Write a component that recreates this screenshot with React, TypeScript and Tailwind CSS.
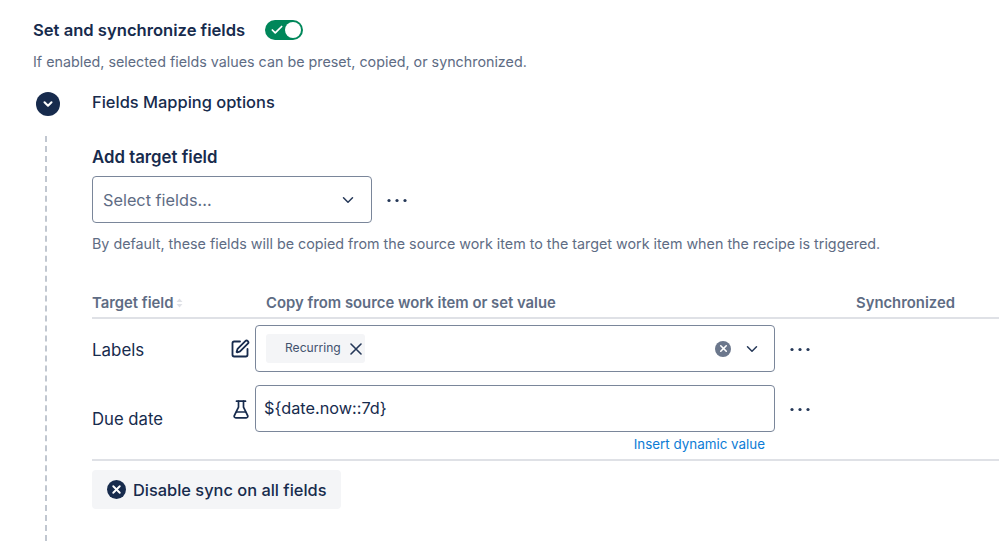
import { Check, ChevronDown, SquarePen, X } from 'lucide-react';

const Dots = () => (
  <svg width="20" height="5" viewBox="0 0 20 5" className="text-[#253858] mt-px" fill="currentColor">
    <circle cx="2" cy="2.5" r="1.6" />
    <circle cx="10" cy="2.5" r="1.6" />
    <circle cx="18" cy="2.5" r="1.6" />
  </svg>
);

const Flask = () => (
  <svg width="16" height="19" viewBox="0 0 16 19" fill="none" stroke="#172b4d" strokeWidth="1.7" strokeLinejoin="round" strokeLinecap="round">
    <path d="M3.5 1.200h9" />
    <path d="M5.500 1.200v6L1.400 15.500c-.6 1.200.2 2.300 1.400 2.300h10.400c1.200 0 2-1.100 1.400-2.300L10.500 7.200v-6" />
    <path d="M3.500 12h9" />
  </svg>
);

const App = () => {
  return (
    <div className="w-[999px] h-[541px] overflow-hidden bg-white text-[#172b4d] font-['Inter',sans-serif] pt-5">
      {/* Header */}
      <div className="pl-[33px] flex items-center h-5">
        <span className="text-[16.6px] font-semibold w-[232px]">Set and synchronize fields</span>
        <div className="w-[38px] h-5 rounded-full bg-[#00875a] flex items-center justify-between pl-[5px] pr-[2px]">
          <Check size={14} strokeWidth={3} className="text-white" />
          <div className="w-4 h-4 rounded-full bg-white" />
        </div>
      </div>
      <p className="pl-[33px] mt-[13px] text-[14.3px] leading-[18px] text-[#5e6c84]">
        If enabled, selected fields values can be preset, copied, or synchronized.
      </p>

      {/* Mapping section */}
      <div className="mt-[21px] pl-[36px] flex h-6 items-center">
        <div className="w-6 h-6 rounded-full bg-[#172b4d] flex items-center justify-center">
          <ChevronDown size={14} strokeWidth={3.5} className="text-white" />
        </div>
        <span className="ml-8 -mt-[4px] text-[16.45px] font-medium">Fields Mapping options</span>
      </div>

      <div className="mt-5 ml-[45px] pl-[45px] h-[405px] border-l-2 border-dashed border-[#c1c7d0] pt-[11px]">
        <div className="text-[16.8px] font-semibold leading-5">Add target field</div>
        <div className="mt-[9px] flex items-center">
          <div className="w-[280px] h-[47px] border border-[#7a869a] rounded-[4px] flex items-center justify-between pl-[10px] pr-[14px]">
            <span className="text-[16.3px] text-[#5e6c84] mt-px">Select fields...</span>
            <ChevronDown size={18} strokeWidth={2} className="text-[#253858]" />
          </div>
          <div className="ml-[15px]"><Dots /></div>
        </div>
        <p className="mt-[12px] text-[14.3px] leading-[18px] text-[#5e6c84]">
          By default, these fields will be copied from the source work item to the target work item when the recipe is triggered.
        </p>

        {/* Table head */}
        <div className="mt-[39px] h-[22px] flex items-center text-[14.85px] font-semibold text-[#5e6c84] border-b-2 border-[#dfe1e6] pb-[3px] box-content">
          <div className="w-[174px] flex items-center gap-[2px]">
            Target field
            <svg width="7" height="10" viewBox="0 0 7 10" fill="#dfe1e6">
              <path d="M3.500 0.500 6.500 4H.5z" />
              <path d="M3.500 9.500 6.500 6H.5z" />
            </svg>
          </div>
          <div className="w-[590px]">Copy from source work item or set value</div>
          <div>Synchronized</div>
        </div>

        {/* Labels row */}
        <div className="mt-[6px] flex items-center h-[47px]">
          <div className="w-[138px] text-[16.9px] mt-[5px]">Labels</div>
          <SquarePen size={20} strokeWidth={2.2} className="text-[#172b4d] shrink-0" />
          <div className="ml-[5px] w-[520px] h-[47px] border border-[#7a869a] rounded-[4px] flex items-center pl-[10px] pr-[13px]">
            <div className="h-[29px] w-[99px] rounded-[3px] bg-[#f4f5f7] flex items-center pl-[19px]">
              <span className="text-[12.1px] text-[#42526e] mr-[9px]">Recurring</span>
              <svg width="12" height="12" viewBox="0 0 12 12" fill="none" stroke="#253858" strokeWidth="1.6" strokeLinecap="round" className="shrink-0">
                <path d="M1 1l10 10M11 1 1 11" />
              </svg>
            </div>
            <div className="ml-auto w-4 h-4 rounded-full bg-[#6b778c] flex items-center justify-center">
              <X size={11} strokeWidth={3.5} className="text-white" />
            </div>
            <ChevronDown size={18} strokeWidth={2} className="ml-[12px] text-[#253858]" />
          </div>
          <div className="ml-[15px]"><Dots /></div>
        </div>

        {/* Due date row */}
        <div className="mt-[13px] flex items-center h-[47px]">
          <div className="w-[141px] text-[16.7px] mt-[22px]">Due date</div>
          <div className="mt-[1px]"><Flask /></div>
          <div className="ml-[6px] w-[520px] h-[47px] border border-[#7a869a] rounded-[4px] flex items-center pl-2 text-[16.3px]">
            {'${date.now::7d}'}
          </div>
          <div className="ml-[15px]"><Dots /></div>
        </div>
        <div className="w-[673px] mt-[3px] text-right text-[13.4px] leading-[18px] text-[#0c7cd5]">Insert dynamic value</div>

        <div className="mt-[6px] border-t-2 border-[#dfe1e6]" />
        <button className="mt-[9px] h-[39px] w-[249px] rounded-[4px] bg-[#f4f5f7] flex items-center pl-[15px] gap-[7px] text-[16.4px] font-medium">
          <span className="w-[19px] h-[19px] rounded-full bg-[#172b4d] flex items-center justify-center">
            <X size={13} strokeWidth={3.5} className="text-white" />
          </span>
          <span className="mt-px">Disable sync on all fields</span>
        </button>
      </div>
    </div>
  );
};

export default App;
